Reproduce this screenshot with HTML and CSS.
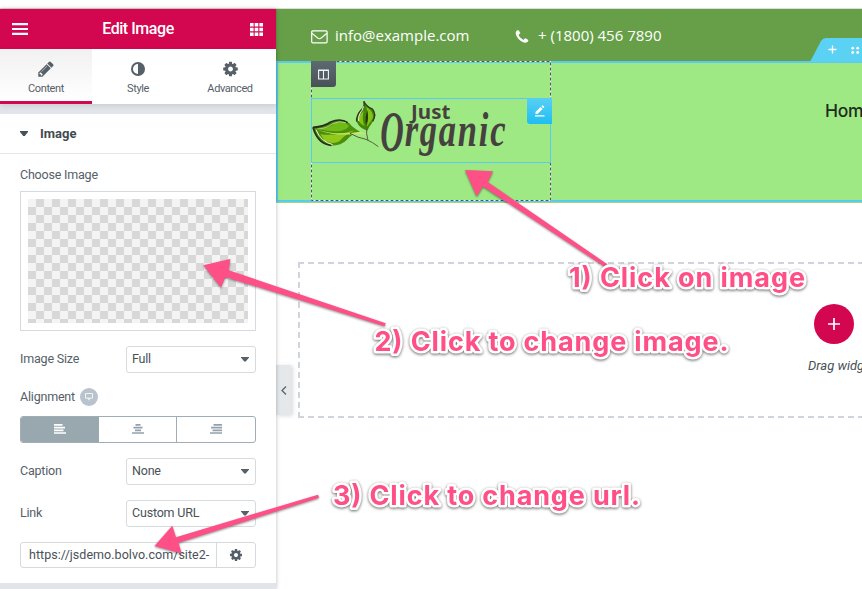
FILE: index.html
```html
<!DOCTYPE html>
<html lang="en">
<head>
<meta charset="utf-8">
<title>Edit Image</title>
<link rel="stylesheet" href="styles.css">
</head>
<body>
<svg width="0" height="0" class="defs">
  <defs>
    <symbol id="cog" viewBox="0 0 1792 1792"><path d="M1152 896q0-106-75-181t-181-75-181 75-75 181 75 181 181 75 181-75 75-181zm512-109v222q0 12-8 23t-20 13l-185 28q-19 54-39 91 35 50 107 138 10 12 10 25t-9 23q-27 37-99 108t-94 71q-12 0-26-9l-138-108q-44 23-91 38-16 136-29 186-7 28-36 28h-222q-14 0-24.5-8.5t-11.5-21.5l-28-184q-49-16-90-37l-141 107q-10 9-25 9-14 0-25-11-126-114-165-168-7-10-7-23 0-12 8-23 15-21 51-66.5t54-70.5q-27-50-41-99l-183-27q-13-2-21-12.5t-8-23.5v-222q0-12 8-23t19-13l186-28q14-46 39-92-40-57-107-138-10-12-10-24 0-10 9-23 26-36 98.5-107.5t94.5-71.5q13 0 26 10l138 107q44-23 91-38 16-136 29-186 7-28 36-28h222q14 0 24.5 8.5t11.5 21.5l28 184q49 16 90 37l142-107q9-9 24-9 13 0 25 10 129 119 165 170 7 8 7 22 0 12-8 23-15 21-51 66.5t-54 70.5q26 50 41 98l183 28q13 2 21 12.5t8 23.5z"/></symbol>
  </defs>
</svg>
<div class="topline"></div>
<div class="app">
  <aside class="panel">
    <header class="panel-head">
      <svg width="16" height="12" viewBox="0 0 16 12"><path d="M0 1.2h16M0 6h16M0 10.8h16" stroke="#fff" stroke-width="2.2"/></svg>
      <span>Edit Image</span>
      <svg width="13" height="13" viewBox="0 0 13 13" fill="#fff"><path d="M0 0h3.6v3.4H0zM4.7 0h3.6v3.4H4.7zM9.4 0H13v3.4H9.4zM0 4.8h3.6v3.4H0zM4.7 4.8h3.6v3.4H4.7zM9.4 4.8H13v3.4H9.4zM0 9.6h3.6V13H0zM4.7 9.6h3.6V13H4.7zM9.4 9.6H13V13H9.4z"/></svg>
    </header>
    <nav class="tabs">
      <div class="tab active">
        <svg width="18" height="18" viewBox="0 0 1792 1792"><path d="M491 1536l91-91-235-235-91 91v107h128v128h107zm523-928q0-22-22-22-10 0-17 7l-542 542q-7 7-7 17 0 22 22 22 10 0 17-7l542-542q7-7 7-17zm-54-192l416 416-832 832h-416v-416zm683 96q0 53-37 90l-166 166-416-416 166-165q36-38 90-38 53 0 91 38l235 234q37 39 37 91z"/></svg>
        <span>Content</span>
      </div>
      <div class="tab">
        <svg width="18" height="18" viewBox="0 0 18 18"><path fill-rule="evenodd" d="M9 2a7 7 0 1 1 0 14A7 7 0 0 1 9 2zm0 2a5 5 0 0 0 0 10z"/></svg>
        <span>Style</span>
      </div>
      <div class="tab">
        <svg width="17" height="18"><use href="#cog"/></svg>
        <span>Advanced</span>
      </div>
    </nav>
    <div class="section-title"><i class="caret"></i>Image</div>
    <div class="controls">
      <div class="label choose">Choose Image</div>
      <div class="media"><div class="checker"></div></div>
      <div class="row size"><span class="label">Image Size</span><div class="select">Full<i class="caret"></i></div></div>
      <div class="row align"><span class="label">Alignment</span>
        <span class="device"><svg width="8" height="8" viewBox="0 0 8 8"><path d="M.5.5h7v4.6h-7z" fill="none" stroke="#f2f5f7"/><path d="M2.500 5.3h3L4 7.8z" fill="#f2f5f7"/></svg></span>
      </div>
      <div class="choices">
        <div class="choice on"><svg width="12" height="10" viewBox="0 0 12 10"><path d="M0 .9h8.5M0 3.6h11M0 6.3h9.5M0 9h12"/></svg></div>
        <div class="choice"><svg width="12" height="10" viewBox="0 0 12 10"><path d="M3.5.9h5M1.5 3.6h9M3 6.3h6M0 9h12"/></svg></div>
        <div class="choice"><svg width="12" height="10" viewBox="0 0 12 10"><path d="M3.5.9H12M1 3.6h11M2.5 6.3H12M0 9h12"/></svg></div>
      </div>
      <div class="row caption"><span class="label">Caption</span><div class="select">None<i class="caret"></i></div></div>
      <div class="row link"><span class="label">Link</span><div class="select">Custom URL<i class="caret"></i></div></div>
      <div class="url"><div class="url-text">https://jsdemo.bolvo.com/site2-</div><div class="url-cog"><svg width="14" height="14"><use href="#cog"/></svg></div></div>
    </div>
  </aside>
  <main class="preview">
    <div class="contact">
      <svg class="mail" width="17" height="14" viewBox="0 0 17 14" fill="none" stroke="#fff" stroke-width="1.2"><rect x=".7" y=".8" width="15.4" height="12" rx="1"/><path d="M.9 3.2l5.9 4.9q1.6 1.3 3.3 0l5.8-4.9"/></svg>
      <span class="mail-text">info@example.com</span>
      <svg class="phone" width="16" height="16" viewBox="0 0 1792 1792" fill="#fff"><path d="M1600 1240q0 27-10 70.5t-21 68.5q-21 50-122 106-94 51-186 51-27 0-53-3.5t-57-12.5-47-14.5-55.5-20.5-49.5-18q-98-35-175-83-127-79-264-216t-216-264q-48-77-83-175-3-9-18-49.5t-20.5-55.5-14.5-47-12.5-57-3.5-53q0-92 51-186 56-101 106-122 25-11 68.5-21t70.5-10q14 0 21 3 18 6 53 76 11 19 30 54t35 63.5 31 53.5q3 4 17.5 25t21.5 35.5 7 28.5q0 20-28.5 50t-62 55-62 53-28.5 46q0 9 5 22.5t8.500 20.5 14 24 11.5 19q76 137 174 235t235 174q2 1 19 11.5t24 14 20.5 8.5 22.5 5q18 0 46-28.5t53-62 55-62 50-28.5q14 0 28.5 7t35.5 21.5 25 17.5q25 15 53.5 31t63.5 35 54 30q70 35 76 53 3 7 3 21z"/></svg>
      <span class="phone-text">+ (1800) 456 7890</span>
    </div>
    <section class="site-head">
      <div class="column">
        <svg class="column-line" width="240" height="141" fill="none"><rect x=".5" y=".5" width="239" height="139" stroke="#fff"/><rect x=".5" y=".5" width="239" height="139" stroke="#4d5a60" stroke-dasharray="3 2"/></svg>
        <div class="handle"><svg width="11" height="11" viewBox="0 0 11 11" fill="none" stroke="#f3f5f5" stroke-width="1.1"><path d="M.6 1h9.8v9H.6zM5.5 1v9M.6 1.5h9.8"/></svg></div>
        <div class="widget">
          <svg class="logo" width="240" height="65" viewBox="33 144 720 195">
            <path d="M37 232Q72 230 92 216Q128 202 148 220Q157 233 180 245Q155 251 140 270Q124 288 90 287Q51 280 37 232z" fill="#4b8f0b"/>
            <path d="M58 237Q84 238 104 220Q130 211 147 227Q144 237 121 243Q88 246 58 237z" fill="#6fbb16"/>
            <path d="M61 253Q105 259 164 241Q133 256 118 274Q99 284 75 273z" fill="#91c91b"/>
            <path d="M52 239Q108 257 181 245L203 253L160 252Q105 259 52 239z" fill="#cbe66a"/>
            <path d="M39 232Q53 283 94 286M39 232Q73 230 92 216Q122 203 143 218" fill="none" stroke="#292d20" stroke-width="5"/>
            <path d="M48 239Q62 275 98 284" fill="none" stroke="#edf6d8" stroke-width="3"/>
            <path d="M52 237Q80 236 98 221Q119 211 138 218" fill="none" stroke="#dff2bb" stroke-width="2"/>
            <path d="M192 152Q195 168 216 175Q236 197 208 230L202 242Q165 229 170 200Q174 184 188 174Q196 165 192 152z" fill="#438706"/>
            <path d="M199 170Q225 185 217 208Q209 220 200 231Q207 201 199 170zM191 183Q172 198 177 214Q184 226 194 227Q184 210 191 183z" fill="#82c118"/>
            <path d="M202 181Q208 209 198 225Q194 206 202 181z" fill="#26380b"/>
            <path d="M191 154Q201 171 217 177Q231 193 218 214M191 154Q196 169 184 180Q168 197 170 215" fill="none" stroke="#33372a" stroke-width="4"/>
            <path d="M191 169Q187 182 180 190Q174 201 176 213" fill="none" stroke="#f0f3df" stroke-width="3"/>
            <path d="M200 230Q198 253 204 271M150 250Q174 264 198 268Q219 277 235 290" fill="none" stroke="#566136" stroke-width="3"/>
            <g fill="#46413f">
              <text class="just" x="333" y="207" font-size="60" textLength="118" lengthAdjust="spacingAndGlyphs">Just</text>
              <text class="script" transform="translate(241 304) scale(.58 1)" font-size="168">O</text>
              <text class="script" transform="translate(314 288) scale(.72 1)" font-size="144" textLength="420" lengthAdjust="spacing">rganic</text>
            </g>
          </svg>
          <div class="edit"><svg width="12" height="12" viewBox="0 0 12 12" fill="#fff"><path d="M1.5 9V7L6.6 2l2 2-5.1 5zM7.4 1.3l.7-.7q.5-.4 1 0l1 1q.4.5 0 1l-.7.7zM1 10.3h9.5v1.1H1z"/></svg></div>
        </div>
      </div>
      <div class="menu">Home</div>
      <div class="section-tab">
        <svg width="60" height="24"><path d="M0 24L11 3Q13 0 16 0H60V24z" fill="#5bd1f4"/><path d="M18.5 11.5h8M22.5 7.5v8" stroke="#fff" stroke-width="1.3"/><g fill="#fff"><circle cx="42.7" cy="10.2" r="1.4"/><circle cx="47.7" cy="10.2" r="1.4"/><circle cx="42.7" cy="14.5" r="1.4"/><circle cx="47.7" cy="14.5" r="1.4"/></g></svg>
      </div>
    </section>
    <section class="drop">
      <svg class="drop-line" width="564" height="156" fill="none" stroke="#d0d5dd" stroke-width="2" stroke-dasharray="6 4"><path d="M0 1H564M0 155H564M1 0V156"/></svg>
      <div class="drop-inner">
        <div class="add"><svg width="12" height="12"><path d="M0 6h12M6 0v12" stroke="#fff" stroke-width="1.7"/></svg></div>
        <div class="hint">Drag widget here</div>
      </div>
    </section>
    <div class="collapse"><svg width="6" height="9" viewBox="0 0 6 9"><path d="M5 .5L1 4.5l4 4" fill="none" stroke="#59646d" stroke-width="1.3"/></svg></div>
  </main>
</div>
<svg class="notes" width="862" height="589">
  <g fill="#ff4f87" class="arrows">
    <path d="M465 170L493 171.3L487.7 182L607 264L605 267L483 186.5L476.7 196.5z"/>
    <path d="M203.3 265.3L230.3 259L228.7 270.3L385.7 323.3L384.5 326.2L225.5 277L221 287.5z"/>
    <path d="M154.5 546L172.3 525.7L176 537.3L318 494.7L319 497.7L178.5 542.8L181.7 553.5z"/>
  </g>
  <g class="note-text">
    <text x="569" y="287" textLength="236">1) Click on image</text>
    <text x="374.5" y="351" textLength="354">2) Click to change image.</text>
    <text x="333" y="504.500" textLength="307">3) Click to change url.</text>
  </g>
</svg>
</body>
</html>
```
FILE: styles.css
```css
* { box-sizing: border-box; }
body { margin: 0; width: 862px; height: 589px; overflow: hidden; background: #fff; font-family: Roboto, sans-serif; font-size: 13px; color: #556068; position: relative; }
svg { display: block; flex: none; }
.defs { position: absolute; }
.topline { height: 9px; border-bottom: 1px solid #dcdcdc; }
.app { display: flex; height: 580px; }

.panel { width: 276px; flex: none; background: #e1e4e8; box-shadow: 0 0 4px rgba(0,0,0,.28); position: relative; z-index: 1; }
.panel-head { height: 40px; background: #d30650; color: #fff; display: flex; align-items: center; justify-content: space-between; padding: 0 13px 0 12px; font-size: 16px; font-weight: 500; }
.panel-head span { position: relative; top: -1px; left: -1px; letter-spacing: -.45px; }
.tabs { display: flex; height: 55px; background: #fff; box-shadow: 0 2px 5px rgba(0,0,0,.1); }
.tab { width: 92px; display: flex; flex-direction: column; align-items: center; padding-top: 11px; font-size: 11px; letter-spacing: -.4px; border-bottom: 3px solid transparent; }
.tab svg { fill: #556068; }
.tab span { line-height: 14px; margin-top: 4px; }
.tab.active { background: linear-gradient(#f1f1f1, #fff); border-color: #d30650; }
.section-title { margin-top: 10px; height: 40px; background: #fff; border-bottom: 1px solid #e4e6e9; display: flex; align-items: center; padding-left: 20px; color: #41494f; font-weight: 700; gap: 12px; }
.caret { width: 8px; height: 5px; background: #495157; clip-path: polygon(0 0, 100% 0, 100% 20%, 60% 100%, 40% 100%, 0 20%); flex: none; }
.controls { background: #fff; height: 429px; padding: 13px 20px 0; font-size: 12.5px; letter-spacing: -.2px; }
.choose { line-height: 16px; }
.row .label { position: relative; top: -1px; }
.media { margin-top: 8px; height: 140px; border: 1px solid #d5dadf; padding: 7px; }
.checker { height: 124px; background: repeating-conic-gradient(#d8d8d8 0 25%, #f4f4f4 0 50%) 0 0 / 16px 16px; }
.row { display: flex; align-items: center; justify-content: space-between; height: 27px; }
.size { margin-top: 15px; }
.select { width: 130px; height: 27px; border: 1px solid #d5dadf; border-radius: 3px; padding: 0 6px 2px 5px; display: flex; align-items: center; justify-content: space-between; color: #495157; }
.select .caret { background: #556068; margin-top: 1px; }
.align { justify-content: flex-start; gap: 5px; margin-top: 10px; height: 27px; }
.align .label { top: 0; }
.device { width: 18px; height: 18px; border-radius: 50%; background: #b9c3ce; display: flex; align-items: center; justify-content: center; }
.choices { margin-top: 6px; height: 27px; border: 1px solid #a0adb5; border-radius: 3px; display: flex; overflow: hidden; }
.choice { width: 77px; display: flex; align-items: center; justify-content: center; }
.choice + .choice + .choice { border-left: 1px solid #a0adb5; width: 79px; }
.choice.on { background: #99a8ae; width: 78px; }
.choice svg { fill: none; stroke: #94a1ad; stroke-width: 1.7; margin-top: -2px; }
.choice.on svg { stroke: #fff; }
.caption { margin-top: 15px; }
.link { margin-top: 15px; }
.url { margin-top: 15px; height: 26px; border: 1px solid #d5dadf; border-radius: 3px; display: flex; align-items: center; color: #495157; }
.url-text { width: 196px; padding-left: 8px; border-right: 1px solid #d5dadf; line-height: 24px; white-space: nowrap; letter-spacing: .04px; }
.url-cog { flex: 1; display: flex; justify-content: center; fill: #556068; }

.preview { flex: 1; position: relative; min-width: 0; }
.contact { height: 52px; background: #669f48; display: flex; align-items: center; padding-left: 35px; color: #fff; font: 15px "Open Sans", sans-serif; white-space: nowrap; }
.mail { margin-top: 3px; }
.mail-text { margin-left: 7px; width: 134px; }
.phone { margin: 3px 0 0 45px; }
.phone-text { margin-left: 8px; }
.site-head { height: 141px; background: #9fe984; border: solid #5bcaf0; border-width: 2px 0 2px 2px; box-shadow: 0 1px #9fd87d; position: relative; display: flex; }
.column { margin: -2px 0 0 33px; width: 240px; height: 141px; position: relative; padding-top: 37px; flex: none; }
.column-line { position: absolute; left: 0; top: 0; }
.handle { position: absolute; left: 0; top: 0; width: 25px; height: 26px; border-radius: 0 0 3px 0; background: linear-gradient(#5d6a72, #495157); display: flex; align-items: center; justify-content: center; }
.widget { height: 65px; box-shadow: inset 0 0 0 1px #5bcaf0; position: relative; }
.just { font-family: "Noto Sans", sans-serif; font-weight: 700; }
.script { font-family: "Liberation Serif", serif; font-style: italic; font-weight: 700; }
.edit { position: absolute; right: -1px; top: 0; width: 25px; height: 26px; border-radius: 0 0 0 3px; background: linear-gradient(#58d0f5, #20bdf2); display: flex; align-items: center; justify-content: center; }
.menu { margin: 34px 0 0 274px; font: 500 17.5px/27px Inter, sans-serif; color: #1e2b20; white-space: nowrap; letter-spacing: -.3px; }
.section-tab { position: absolute; left: 532px; top: -25px; width: 52px; overflow: hidden; }
.drop { margin: 60px 0 0 22px; height: 156px; position: relative; overflow: hidden; }
.drop-line { position: absolute; left: 0; top: 0; }
.drop-inner { position: relative; padding: 42px 0 0 510px; width: 700px; }
.add { width: 40px; height: 40px; margin-left: 6px; border-radius: 50%; background: #d30650; display: flex; align-items: center; justify-content: center; }
.hint { margin-top: 14px; font-style: italic; color: #495157; line-height: 16px; }
.collapse { position: absolute; left: 0; top: 356px; width: 15px; height: 50px; background: #e4e8eb; box-shadow: 2px 1px 4px rgba(0,0,0,.14); display: flex; align-items: center; justify-content: center; }

.notes { position: absolute; left: 0; top: 0; z-index: 3; }
.arrows { filter: drop-shadow(0 1px 1px rgba(0,0,0,.45)); }
.note-text { font: 700 27px Inter, sans-serif; fill: #ff4f87; stroke: #fff; stroke-width: 5px; stroke-linejoin: round; paint-order: stroke; filter: drop-shadow(0 1px 1.5px rgba(0,0,0,.6)); }
```
